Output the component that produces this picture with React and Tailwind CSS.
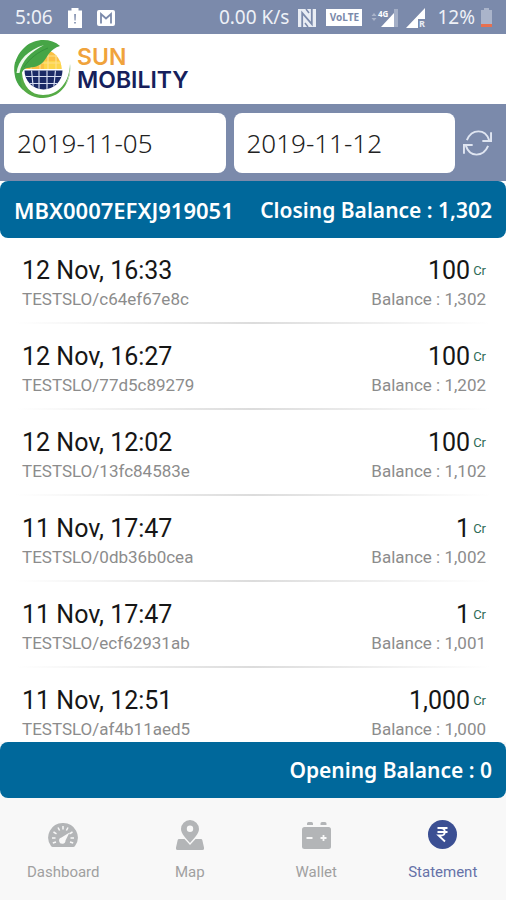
import React, { useState } from "react";

const transactions = [
  { id: 1, time: "12 Nov, 16:33", ref: "TESTSLO/c64ef67e8c", amount: "100", balance: "1,302" },
  { id: 2, time: "12 Nov, 16:27", ref: "TESTSLO/77d5c89279", amount: "100", balance: "1,202" },
  { id: 3, time: "12 Nov, 12:02", ref: "TESTSLO/13fc84583e", amount: "100", balance: "1,102" },
  { id: 4, time: "11 Nov, 17:47", ref: "TESTSLO/0db36b0cea", amount: "1", balance: "1,002" },
  { id: 5, time: "11 Nov, 17:47", ref: "TESTSLO/ecf62931ab", amount: "1", balance: "1,001" },
  { id: 6, time: "11 Nov, 12:51", ref: "TESTSLO/af4b11aed5", amount: "1,000", balance: "1,000" },
];

function StatusBar() {
  return (
    <div className="flex h-[34px] shrink-0 items-center justify-between bg-[#7b8aab] pl-[15px] pr-[14px] pt-px font-['Noto_Sans',sans-serif] text-[19px] text-[#eef1f7]">
      <div className="flex items-center">
        <span>5:06</span>
        <svg className="ml-[15px]" width="14" height="20" viewBox="0 0 14 20">
          <path d="M3.5 0h7v2.5H14V20H0V2.5h3.5z" fill="#fff" />
          <path d="M6.2 6h1.7l-.3 6.5H6.5zM6.2 14h1.6v1.6H6.2z" fill="#7b8aab" />
        </svg>
        <svg className="ml-[15px]" width="18" height="16" viewBox="0 0 18 16">
          <rect width="18" height="16" rx="2" fill="#fff" />
          <path d="M4 13.500V4l5 4.500L14 4v9.500" fill="none" stroke="#7b8aab" strokeWidth="1.800" />
        </svg>
      </div>
      <div className="flex items-center">
        <span>0.00 K/s</span>
        <svg className="ml-[9px]" width="18" height="18" viewBox="0 0 18 18">
          <path d="M0 0h18v18H0z" fill="#e9edf4" />
          <path d="M4.200 18V4l9.600 11V0" fill="none" stroke="#7b8aab" strokeWidth="1.800" />
          <path d="M8 0l3 4M10 18l-3-4" stroke="#7b8aab" strokeWidth="1.500" />
        </svg>
        <span className="ml-[10px] flex h-[17px] w-9 items-center justify-center bg-white text-[10px] font-bold text-[#7b8aab]">
          VoLTE
        </span>
        <svg className="ml-[9px]" width="28" height="20" viewBox="0 0 28 20">
          <path d="M3 5l2.500 3h-5zM3 13l2.500-3h-5z" fill="#aab4ca" />
          <path d="M23 5v14H10z" fill="#fff" />
          <path d="M23 1h4v18h-4z" fill="#a3aec6" />
          <text x="7" y="9" fontSize="8" fontWeight="700" fill="#fff">4G</text>
        </svg>
        <svg className="ml-[7px]" width="20" height="24" viewBox="0 0 20 24">
          <path d="M19 2v11h-7v9H0z" fill="#fff" />
          <text x="13" y="21" fontSize="9" fontWeight="700" fill="#e9edf4">R</text>
        </svg>
        <span className="ml-[11px]">12%</span>
        <svg className="ml-[6px]" width="11" height="19" viewBox="0 0 11 19">
          <path d="M3 0h5v2h3v17H0V2h3z" fill="#aab4ca" />
          <path d="M0 16h11v3H0z" fill="#e8704f" />
        </svg>
      </div>
    </div>
  );
}

function Logo() {
  return (
    <div className="flex items-center gap-[6px]">
      <svg width="57" height="58" viewBox="0 0 57 58">
        <defs>
          <clipPath id="sunTop">
            <path d="M10.500 29a18.500 19.500 0 0 1 37 0z" />
          </clipPath>
          <clipPath id="sunBottom">
            <path d="M10.500 30.500h38a19 19 0 0 1-38 0z" />
          </clipPath>
        </defs>
        <g clipPath="url(#sunTop)">
          <path d="M10 9h39v21H10z" fill="#fbc044" />
          <path d="M30 21h19v9H30z" fill="#fcd64a" />
          <path d="M17 9v21M26 9v21M34 9v21M42 9v21M10 16h39M10 23h39" stroke="#fde08a" strokeWidth="1.200" />
        </g>
        <g clipPath="url(#sunBottom)">
          <path d="M10 30h39v20H10z" fill="#1b2a66" />
          <path d="M17.500 30l2 20M25 30v20M33 30v20M41.500 30l-2 20M10 36.500h39M10 43.500h39" stroke="#d5dcf0" strokeWidth="1.200" />
        </g>
        {/* 外圈 */}
        <path d="M1 22C-2 42 11 58 29 58c17 0 29-15 27-34-.5 18-11 31-27 31C17 55 9 46 8 33L3 22z" fill="#56ab46" />
        <path d="M56.300 24c.6 8-1 15-5 21 3-6 4.500-13 5-21z" fill="#d9e6d5" />
        {/* 葉子 */}
        <path d="M46 6C37-2 21-2 11 7 1 16-2 28 2 40c1.500 4 4 7 7 10-1-3-2.500-8-2-12 .5-6 2-9 6-10 7-1 12-1 17-7 4-5 6-12 16-15z" fill="#46a546" />
        <path d="M2.500 33C4 20 14 10 30 5 17 12 8 20 5.500 33z" fill="#eef8eb" />
        <path d="M10 27C16 18 24 12 34 8" fill="none" stroke="#35923c" strokeWidth="1" />
      </svg>
      <div className="flex flex-col font-[Inter,sans-serif] text-[23px] font-semibold leading-[23px]">
        <span className="text-[#f0a33c]">SUN</span>
        <span className="text-[#171f5c]">MOBILITY</span>
      </div>
    </div>
  );
}

function DateField({ label, value, onChange }) {
  return (
    <input
      type="text"
      aria-label={label}
      value={value}
      onChange={(e) => onChange(e.target.value)}
      className="h-[60px] min-w-0 flex-1 rounded-lg bg-white px-[13px] font-['Noto_Sans',sans-serif] text-[26px] font-light text-[#222] outline-none"
    />
  );
}

function Transaction({ item }) {
  return (
    <li className="relative flex h-[86px] justify-between pl-[22px] pr-5 pt-[19px] font-[Roboto,sans-serif]">
      <div>
        <p className="text-[25px] leading-[28px] text-[#161616]">{item.time}</p>
        <p className="text-[17px] leading-[28px] text-[#8c8c8c]">{item.ref}</p>
      </div>
      <div>
        <p className="flex items-center justify-end gap-[3px] text-[25px] leading-[28px] text-[#161616]">
          {item.amount}
          <span className="text-[13px] text-[#2f6b57]">Cr</span>
        </p>
        <p className="text-right text-[17px] leading-[28px] text-[#8c8c8c]">Balance : {item.balance}</p>
      </div>
      <div className="absolute inset-x-4 bottom-0 h-[2px] bg-linear-to-r from-transparent via-[#dcdcdc] to-transparent" />
    </li>
  );
}

// 底部選單圖示
function DashboardIcon() {
  return (
    <svg width="30" height="26" viewBox="0 0 30 26">
      <path d="M15 1A14.500 14.500 0 0 0 3 24q.6 1 1.800 1h20.400q1.200 0 1.800-1A14.500 14.500 0 0 0 15 1z" fill="#b3b5b7" />
      <path d="M4 16h3.500M5.500 10l3 1.800M10 5.500l1.600 3M15 4v3.500M20 5.500l-1.600 3M24.500 10l-3 1.800M26 16h-3.500M4.800 21l3.200-1M25.200 21l-3.200-1" stroke="#f8f8f8" strokeWidth="1.500" />
      <path d="M21.500 10.500l-4 8a3.200 3.200 0 1 1-4-3z" fill="#f8f8f8" />
    </svg>
  );
}

function MapIcon() {
  return (
    <svg width="28" height="30" viewBox="0 0 28 30">
      <path fillRule="evenodd" d="M14 0a9 9 0 0 1 9 9c0 5-5 9-9 14-4-5-9-9-9-14a9 9 0 0 1 9-9zm0 5.500a3.200 3.200 0 1 0 0 6.400 3.200 3.200 0 0 0 0-6.400z" fill="#b3b5b7" />
      <path d="M3 19h5.500l5.500 6 5.500-6H25q1 0 1.300 1L28 27.500q.4 2.500-1.500 2.500h-25Q-.4 30 0 27.500L1.700 20q.3-1 1.300-1z" fill="#b3b5b7" />
    </svg>
  );
}

function WalletIcon() {
  return (
    <svg width="29" height="28" viewBox="0 0 29 28">
      <path d="M5 4V2.500Q5 1 6.500 1h3Q11 1 11 2.500V4zM18.500 4V2.500Q18.500 1 20 1h3q1.500 0 1.500 1.500V4z" fill="#b3b5b7" />
      <rect y="6" width="29" height="22" rx="2.500" fill="#b3b5b7" />
      <path d="M4.500 17h6M18.500 17h6M21.500 14v6" stroke="#f8f8f8" strokeWidth="1.800" />
    </svg>
  );
}

function StatementIcon() {
  return (
    <svg width="29" height="29" viewBox="0 0 29 29">
      <circle cx="14.500" cy="14.500" r="14.500" fill="#3b4f93" />
      <path d="M9.500 8h10M9.500 12h10M10 8h3c5 0 5 7.500 0 7.500h-2.500l6.500 6" fill="none" stroke="#fff" strokeWidth="1.800" />
    </svg>
  );
}

const tabs = [
  { name: "Dashboard", Icon: DashboardIcon },
  { name: "Map", Icon: MapIcon },
  { name: "Wallet", Icon: WalletIcon },
  { name: "Statement", Icon: StatementIcon, active: true },
];

export default function App() {
  const [from, setFrom] = useState("2019-11-05");
  const [to, setTo] = useState("2019-11-12");

  return (
    <div className="flex h-screen flex-col bg-white">
      <StatusBar />
      <header className="flex h-[70px] shrink-0 items-center bg-white px-[14px]">
        <Logo />
      </header>

      {/* 日期範圍 */}
      <div className="flex h-[77px] shrink-0 items-center gap-2 bg-[#7b8aab] pl-1 pr-[14px]">
        <DateField label="From date" value={from} onChange={setFrom} />
        <DateField label="To date" value={to} onChange={setTo} />
        <button type="button" aria-label="Refresh">
          <svg width="29" height="26" viewBox="0 0 30 26" fill="none" stroke="#dfe5f1" strokeWidth="2">
            <path d="M4 10C7 3 12 1 16 1c5 0 9 3 11 9M29 2v9h-9M26 16c-3 7-8 9-12 9-5 0-9-3-11-9M1 24v-9h9" />
          </svg>
        </button>
      </div>

      <div className="flex h-[57px] shrink-0 items-center justify-between rounded-lg bg-[#00689b] px-[14px] pt-[2px] font-['Noto_Sans',sans-serif] font-semibold text-white">
        <span className="text-[22px]">MBX0007EFXJ919051</span>
        <span className="text-[21px]">Closing Balance : 1,302</span>
      </div>

      <ul className="min-h-0 flex-1 overflow-y-auto [scrollbar-width:none]">
        {transactions.map((item) => (
          <Transaction key={item.id} item={item} />
        ))}
      </ul>

      <div className="bg-[#f8f8f8]">
        <div className="flex h-14 items-center justify-end rounded-lg bg-[#00689b] px-[14px] pt-[2px] font-['Noto_Sans',sans-serif] text-[21px] font-semibold text-white">
          <span>Opening Balance : 0</span>
        </div>
        <nav className="grid h-[102px] grid-cols-4 font-[Roboto,sans-serif] text-[15px]">
          {tabs.map(({ name, Icon, active }) => (
            <a
              key={name}
              href="#"
              className={`flex flex-col items-center pt-[21px] ${active ? "text-[#6672a8]" : "text-[#a0a0a0]"}`}
            >
              <span className="flex h-[31px] items-center">
                <Icon />
              </span>
              <span className="mt-3 leading-5">{name}</span>
            </a>
          ))}
        </nav>
      </div>
    </div>
  );
}
